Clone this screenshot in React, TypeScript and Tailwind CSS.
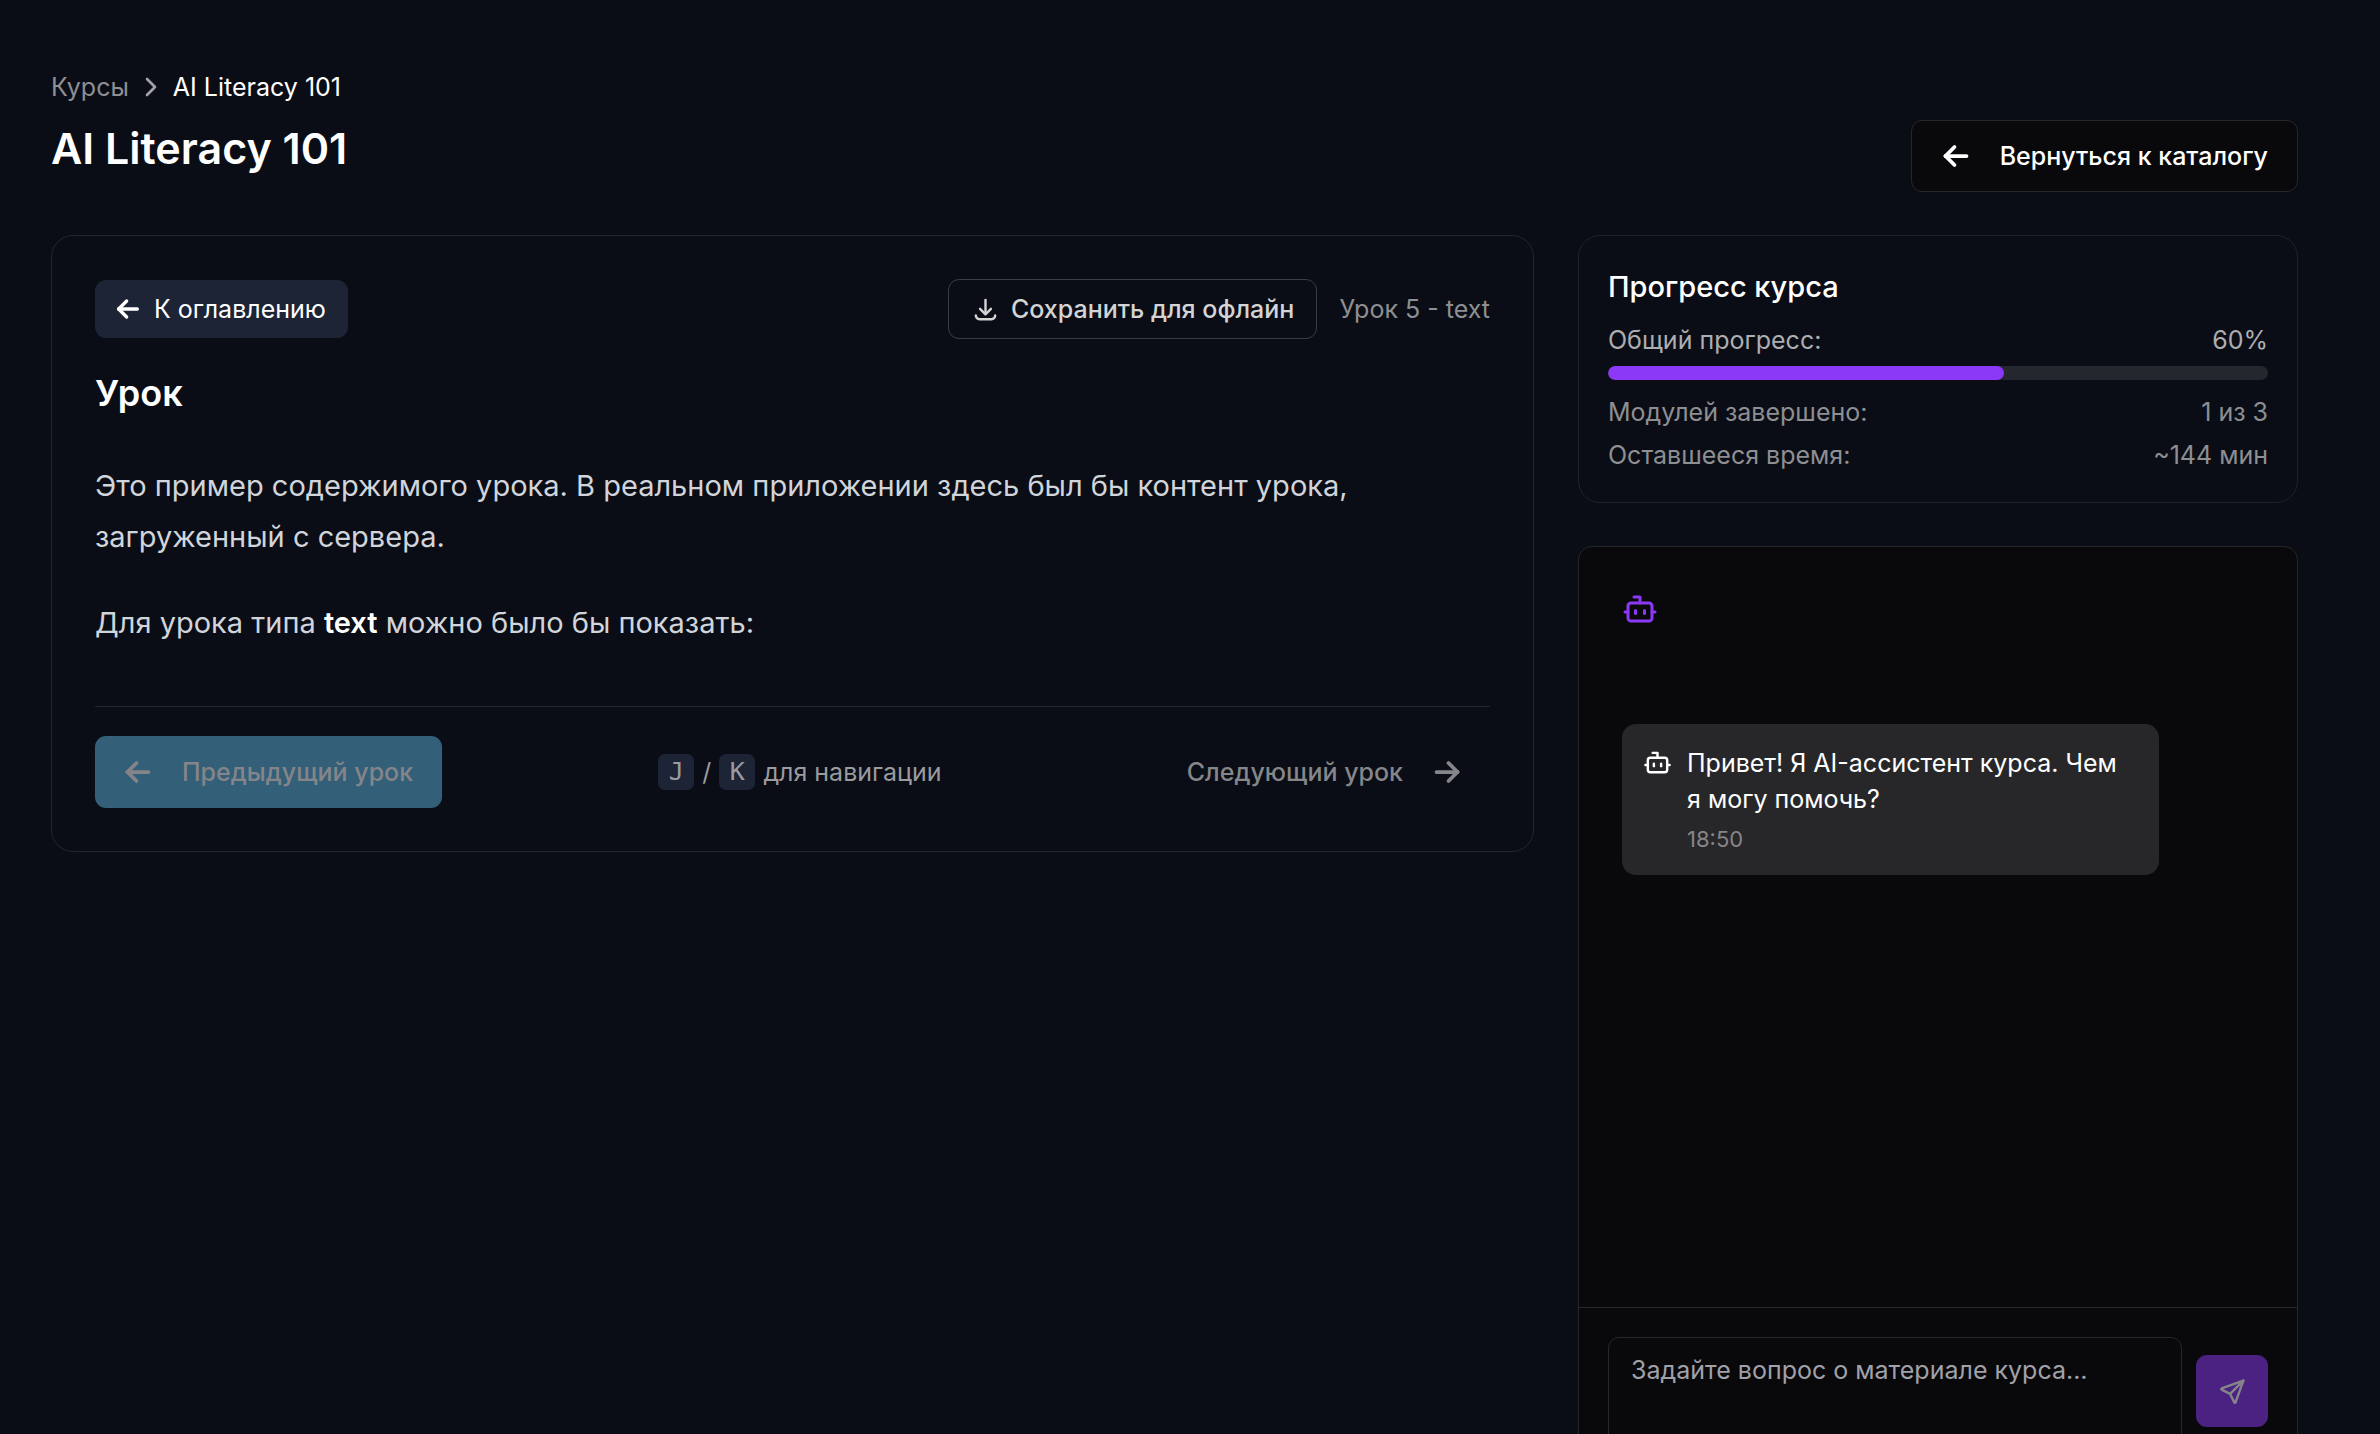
import React from "react";

function Icon({ className, children }: { className: string; children: React.ReactNode }) {
  return (
    <svg viewBox="0 0 24 24" fill="none" stroke="currentColor" strokeWidth="2" strokeLinecap="round" strokeLinejoin="round" aria-hidden="true" className={`shrink-0 ${className}`}>
      {children}
    </svg>
  );
}
const ArrowLeft = ({ className }: { className: string }) => (
  <Icon className={className}><g strokeWidth="2.5"><path d="M5 12h14" /><path d="M5 12l6 6" /><path d="M5 12l6 -6" /></g></Icon>
);
const ArrowRight = ({ className }: { className: string }) => (
  <Icon className={className}><g strokeWidth="2.5"><path d="M5 12h14" /><path d="M13 18l6 -6" /><path d="M13 6l6 6" /></g></Icon>
);
const Bot = ({ className }: { className: string }) => (
  <Icon className={className}>
    <path d="M12 8V4H8" /><rect width="16" height="12" x="4" y="8" rx="2" /><path d="M2 14h2" /><path d="M20 14h2" /><path d="M15 13v2" /><path d="M9 13v2" />
  </Icon>
);

export default function App() {
  return (
    <div className="h-screen overflow-hidden bg-[#0a0d15] pt-[69px] pr-[82px] pl-[51px] font-['Inter',sans-serif] text-[25px] leading-[36px] text-white">
      <header className="flex items-end justify-between">
        <div className="self-start">
          <nav aria-label="Навигация" className="flex items-center gap-[6px]">
            <a href="#courses" className="text-[#8e8f93]">Курсы</a>
            <Icon className="size-[32px] text-[#a1a1aa]"><path d="M9 6l6 6l-6 6" /></Icon>
            <span>AI Literacy 101</span>
          </nav>
          <h1 className="mt-[18px] text-[43px] leading-[50px] font-semibold">AI Literacy 101</h1>
        </div>
        <button className="mt-[51px] flex h-[72px] items-center gap-[26px] rounded-[11px] border border-[#27272a] bg-[#09090b] pr-[29px] pl-[26px] font-medium">
          <ArrowLeft className="size-[36px]" />
          Вернуться к каталогу
        </button>
      </header>

      <div className="mt-[43px] grid grid-cols-[minmax(0,1483fr)_minmax(0,720fr)] items-start gap-[44px]">
        <main className="rounded-[22px] border border-[#23262e] p-[43px]">
          <div className="flex items-center justify-between">
            <button className="flex h-[58px] items-center gap-[10px] rounded-[11px] bg-[#1c2436] pr-[22px] pl-[17px]">
              <ArrowLeft className="size-[32px]" />
              К оглавлению
            </button>
            <div className="flex items-center gap-[22px]">
              <button className="flex h-[60px] items-center gap-[11px] rounded-[11px] border border-[#3b3d44] px-[22px] font-medium text-[#d4d4d4]">
                <Icon className="size-[29px]"><path d="M4 17a3 3 0 0 0 3 3h10a3 3 0 0 0 3 -3" /><path d="M7.5 11.5l4.5 4.5l4.5 -4.5" /><path d="M12 4v11.5" /></Icon>
                Сохранить для офлайн
              </button>
              <span className="text-[#8e8f93]">Урок 5 - text</span>
            </div>
          </div>

          <h2 className="mt-[29px] text-[36px] leading-[50px] font-semibold">Урок</h2>
          <div className="mt-[42px] text-[29px] leading-[51px] text-[#d1d5db]">
            <p className="max-w-[1300px]">Это пример содержимого урока. В реальном приложении здесь был бы контент урока, загруженный с сервера.</p>
            <p className="mt-[35px]">Для урока типа <strong className="font-semibold text-white">text</strong> можно было бы показать:</p>
          </div>

          <div className="mt-[58px] flex items-center justify-between border-t border-[#23262e] pt-[29px]">
            <button disabled className="flex h-[72px] items-center gap-[26px] rounded-[11px] bg-[#335f79] pr-[29px] pl-[25px] font-medium text-[#858589]">
              <ArrowLeft className="size-[36px]" />
              Предыдущий урок
            </button>
            <div className="flex items-center gap-2 text-[#9a9b9e]">
              <kbd className="flex size-[36px] items-center justify-center rounded-[7px] bg-[#1c2436] font-['DejaVu_Sans_Mono',monospace] text-[25px]">J</kbd>
              /
              <kbd className="flex size-[36px] items-center justify-center rounded-[7px] bg-[#1c2436] font-['DejaVu_Sans_Mono',monospace] text-[25px]">K</kbd>
              для навигации
            </div>
            <button disabled className="flex h-[72px] items-center gap-[26px] pr-[25px] pl-[29px] font-medium text-[#858689]">
              Следующий урок
              <ArrowRight className="size-[36px]" />
            </button>
          </div>
        </main>

        <aside className="flex flex-col gap-[43px]">
          <section className="rounded-[22px] border border-[#1f2229] p-[29px]">
            <h2 className="text-[29px] leading-[43px] font-medium">Прогресс курса</h2>
            <div className="mt-[14px] flex justify-between text-[#adaeb1]">
              <span>Общий прогресс:</span>
              <span>60%</span>
            </div>
            <div role="progressbar" aria-label="Общий прогресс" aria-valuenow={60} aria-valuemin={0} aria-valuemax={100} className="mt-[8px] h-[14px] overflow-hidden rounded-[7px] bg-[#25272f]">
              <div className="h-full w-3/5 rounded-[7px] bg-[#8b39f7]" />
            </div>
            <div className="mt-[14px] flex justify-between text-[#8e8f93]">
              <span>Модулей завершено:</span>
              <span>1 из 3</span>
            </div>
            <div className="mt-[7px] flex justify-between text-[#8e8f93]">
              <span>Оставшееся время:</span>
              <span>~144 мин</span>
            </div>
          </section>

          <section className="rounded-[14px] border border-[#27272a] bg-[#09090b]">
            <div className="px-[43px] pt-[44px]">
              <Bot className="size-[36px] text-[#8b39f7]" />
            </div>
            <div className="mt-[97px] min-h-[583px] px-[43px]">
              <article className="flex w-fit max-w-[85%] items-start gap-[15px] rounded-[14px] bg-[#27272a] px-[21px] pt-[21px] pb-[22px]">
                <Bot className="mt-[3px] size-[29px]" />
                <div className="max-w-[451px]">
                  <p className="pr-4">Привет! Я AI-ассистент курса. Чем я могу помочь?</p>
                  <time className="mt-[8px] block text-[22px] leading-[28px] text-[#858589]">18:50</time>
                </div>
              </article>
            </div>
            <form className="flex items-center gap-[14px] border-t border-[#27272a] p-[29px]" onSubmit={(e) => e.preventDefault()}>
              <textarea aria-label="Вопрос" placeholder="Задайте вопрос о материале курса..." className="block h-[108px] min-w-0 flex-1 resize-none rounded-[11px] border border-[#27272a] bg-transparent px-[22px] py-[14px] placeholder:text-[#a1a1aa]" />
              <button disabled aria-label="Отправить" className="flex size-[72px] items-center justify-center rounded-[11px] bg-[#4b2182] text-[#858589]">
                <Icon className="size-[29px]"><path d="M10 14l11 -11" /><path d="M21 3l-6.5 18a.55 .55 0 0 1 -1 0l-3.5 -7l-7 -3.5a.55 .55 0 0 1 0 -1l18 -6.5" /></Icon>
              </button>
            </form>
          </section>
        </aside>
      </div>
    </div>
  );
}
